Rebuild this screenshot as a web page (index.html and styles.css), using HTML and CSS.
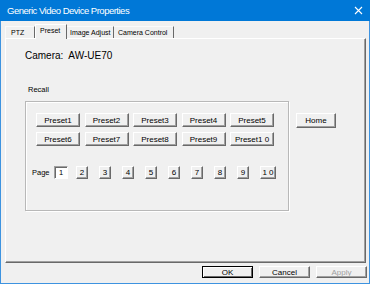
FILE: index.html
```html
<!DOCTYPE html>
<html>
<head>
    <title>Generic Video Device Properties</title>
    <link rel="stylesheet" href="styles.css">
</head>
<body>
    <div class="window">
        <div class="titlebar">
            <span class="title">Generic Video Device Properties</span>
            <svg class="close" width="9" height="9" viewBox="0 0 9 9">
                <path d="M1 1 L8 8 M8 1 L1 8" stroke="#fff" stroke-width="1.1" fill="none"/>
            </svg>
        </div>
        <div class="content">
            <div class="tabs">
                <div class="tab tab-ptz">PTZ</div>
                <div class="tab tab-preset selected">Preset</div>
                <div class="tab tab-image">Image Adjust</div>
                <div class="tab tab-camera">Camera Control</div>
            </div>
            <div class="panel">
                <div class="camera">Camera:&nbsp; AW-UE70</div>
                <div class="recall-label">Recall</div>
                <div class="recall-row">
                    <div class="group">
                        <div class="presets">
                            <button class="btn">Preset1</button>
                            <button class="btn">Preset2</button>
                            <button class="btn">Preset3</button>
                            <button class="btn">Preset4</button>
                            <button class="btn">Preset5</button>
                            <button class="btn">Preset6</button>
                            <button class="btn">Preset7</button>
                            <button class="btn">Preset8</button>
                            <button class="btn">Preset9</button>
                            <button class="btn">Preset1 0</button>
                        </div>
                        <div class="pages">
                            <span class="page-label">Page</span>
                            <span class="page-box">1</span>
                            <div class="page-btns">
                                <button class="btn page">2</button>
                                <button class="btn page">3</button>
                                <button class="btn page">4</button>
                                <button class="btn page">5</button>
                                <button class="btn page">6</button>
                                <button class="btn page">7</button>
                                <button class="btn page">8</button>
                                <button class="btn page">9</button>
                                <button class="btn page wide">1 0</button>
                            </div>
                        </div>
                    </div>
                    <button class="btn home">Home</button>
                </div>
            </div>
        </div>
        <div class="footer">
            <button class="btn dlg default">OK</button>
            <button class="btn dlg">Cancel</button>
            <button class="btn dlg disabled">Apply</button>
        </div>
    </div>
</body>
</html>
```

FILE: styles.css
```css
body { margin: 0; padding: 0; font-family: "Liberation Sans", Arial, sans-serif; color: #000; }
.window {
    width: 370px;
    height: 284px;
    box-sizing: border-box;
    border: 1px solid #3d93e0;
    border-top: 0;
    background: #f0f0f0;
    display: flex;
    flex-direction: column;
}
.titlebar {
    height: 21px;
    margin: 0 -1px;
    background: #0078d7;
    color: #fff;
    display: flex;
    align-items: center;
    justify-content: space-between;
    padding: 0 7px 0 7px;
    font-size: 9.5px;
    letter-spacing: -0.5px;
}
.close { margin-right: 0; }

.content { padding: 3px 3px 0 4px; }
.tabs {
    height: 14px;
    display: flex;
    align-items: flex-end;
    font-size: 7px;
    white-space: nowrap;
    position: relative;
    z-index: 1;
}
.tab {
    height: 12px;
    box-sizing: border-box;
    padding: 2px 0 0 4px;
    border-top: 1px solid #fafafa;
    border-right: 1px solid #696969;
}
.tab-ptz { width: 30px; padding-left: 5px; border-left: 1px solid #fafafa; }
.tab-preset { width: 32px; }
.tab-image { width: 47px; padding-left: 3px; }
.tab-camera { width: 60px; }
.tab.selected {
    height: 15px;
    margin-bottom: -1px;
    background: #f0f0f0;
    border-left: 1px solid #fff;
    border-top-color: #fff;
    padding-top: 2px;
}

.panel {
    height: 225px;
    box-sizing: border-box;
    border: 1px solid;
    border-color: #fff #696969 #696969 #fff;
    box-shadow: inset -1px -1px 0 #a0a0a0;
    padding: 11px 0 0 19px;
}
.camera { font-size: 10px; line-height: 12px; height: 12px; }
.recall-label { font-size: 7.5px; margin: 23px 0 0 3px; line-height: 10px; }
.recall-row { display: flex; align-items: flex-start; margin-top: 6px; }
.group {
    width: 264px;
    height: 110px;
    box-sizing: border-box;
    border: 1px solid #b8b8b8;
    box-shadow: inset 1px 1px 0 #fff, 1px 1px 0 #fff;
    padding: 11px 0 0 10px;
}
.presets {
    display: grid;
    grid-template-columns: repeat(5, 44px);
    grid-auto-rows: 14px;
    column-gap: 4.5px;
    row-gap: 5px;
}
.btn {
    font-family: "Liberation Sans", Arial, sans-serif;
    font-size: 8px;
    color: #000;
    background: #f0f0f0;
    border: 1px solid;
    border-color: #fff #696969 #696969 #fff;
    box-shadow: inset -1px -1px 0 #a0a0a0;
    padding: 0;
    margin: 0;
    box-sizing: border-box;
}
.home { width: 40px; height: 15px; margin: 12px 0 0 7px; }

.pages { display: flex; align-items: center; margin: 20px 0 0 -4px; font-size: 7.5px; }
.page-label { width: 22px; }
.page-box {
    width: 14px;
    height: 13px;
    box-sizing: border-box;
    background: #fff;
    border: 1px solid;
    border-color: #a0a0a0 #fff #fff #a0a0a0;
    box-shadow: inset 1px 1px 0 #696969;
    padding: 1px 0 0 4px;
}
.page-btns { display: flex; gap: 11px; margin-left: 8px; }
.page { width: 12px; height: 13px; }
.page.wide { width: 16px; }

.footer {
    display: flex;
    justify-content: flex-end;
    gap: 6px;
    padding: 3px 2px 5px 0;
}
.dlg { width: 51px; height: 12px; }
.dlg.default { border-color: #000; box-shadow: inset 1px 1px 0 #fff, inset -1px -1px 0 #696969; }
.dlg.disabled { color: #a0a0a0; }
```
